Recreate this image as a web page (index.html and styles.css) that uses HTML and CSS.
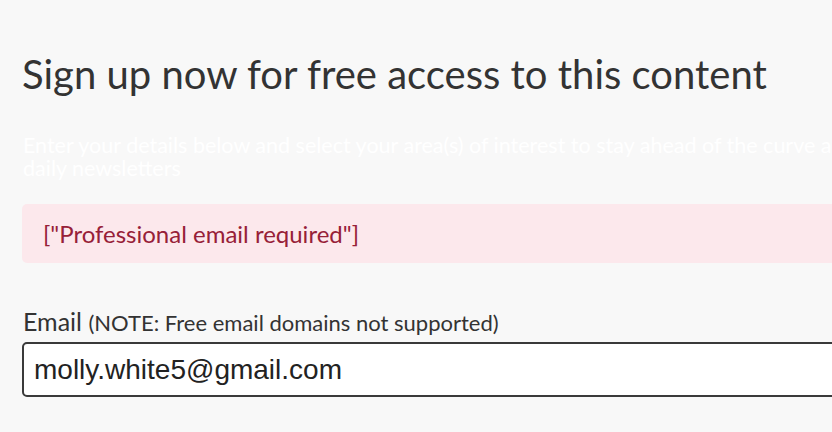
FILE: index.html
```html
<!DOCTYPE html>
<html lang="en">
<head>
<meta charset="utf-8">
<link rel="stylesheet" href="styles.css">
</head>
<body>
<main class="signup">
  <h1 class="title">Sign up now for free access to this content</h1>
  <p class="intro">Enter your details below and select your area(s) of interest to stay ahead of the curve and receive our daily newsletters</p>
  <div class="alert">["Professional email required"]</div>
  <div class="field">
    <label class="label" for="email">Email <span class="note">(NOTE: Free email domains not supported)</span></label>
    <input class="input" id="email" type="text" value="molly.white5@gmail.com">
  </div>
</main>
</body>
</html>
```
FILE: styles.css
```css
html, body {
  margin: 0;
  padding: 0;
  background: #f8f8f8;
  overflow: hidden;
}
.signup {
  width: 1000px;
  padding: 0 0 0 22px;
  font-family: Lato, "Open Sans", sans-serif;
}
.title {
  margin: 0;
  padding-top: 50px;
  font-size: 40px;
  line-height: 48px;
  font-weight: 400;
  color: #333333;
}
.intro {
  margin: 36px 0 0 1px;
  font-size: 21.5px;
  line-height: 23px;
  color: #ffffff;
  width: 960px;
}
.alert {
  margin-top: 24px;
  height: 59px;
  box-sizing: border-box;
  padding: 0 21px;
  display: flex;
  align-items: center;
  background: #fce8ec;
  border-radius: 5px;
  color: #972038;
  font-size: 24px;
}
.field {
  margin-top: 43px;
  display: flex;
  flex-direction: column;
}
.label {
  font-size: 25px;
  line-height: 30px;
  color: #333333;
  margin-bottom: 4px;
  padding-left: 1px;
}
.note {
  font-size: 22px;
}
.input {
  height: 55px;
  box-sizing: border-box;
  border: 2px solid #3a3a3a;
  border-radius: 5px;
  background: #ffffff;
  padding: 0 10px;
  font-family: "Liberation Sans", Arial, sans-serif;
  font-size: 28px;
  color: #222222;
  outline: none;
}
```
